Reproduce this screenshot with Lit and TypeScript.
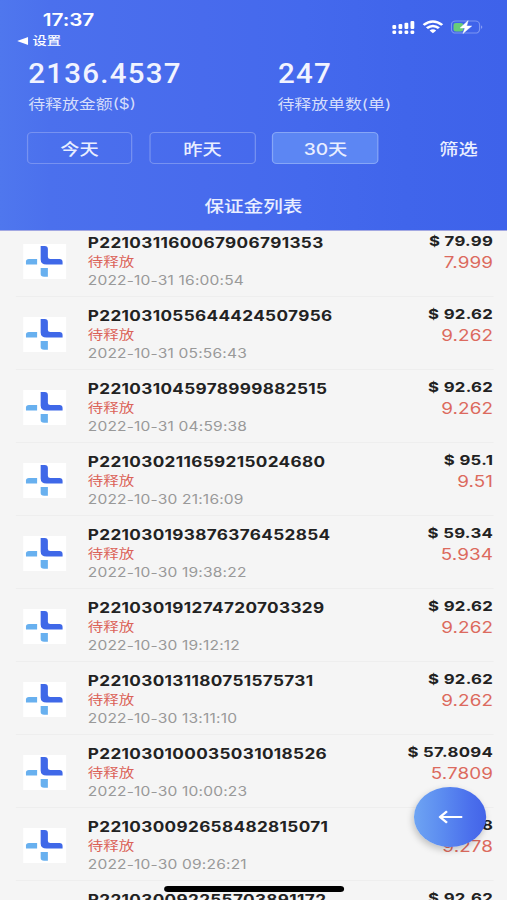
import { LitElement, html, css } from "lit";
import { customElement, property } from "lit/decorators.js";

interface Deposit {
  id: string;
  time: string;
  amount: string;
  held: string;
}

const DEPOSITS: Deposit[] = [
  { id: "P221031160067906791353", time: "2022-10-31 16:00:54", amount: "79.99", held: "7.999" },
  { id: "P221031055644424507956", time: "2022-10-31 05:56:43", amount: "92.62", held: "9.262" },
  { id: "P221031045978999882515", time: "2022-10-31 04:59:38", amount: "92.62", held: "9.262" },
  { id: "P221030211659215024680", time: "2022-10-30 21:16:09", amount: "95.1", held: "9.51" },
  { id: "P221030193876376452854", time: "2022-10-30 19:38:22", amount: "59.34", held: "5.934" },
  { id: "P221030191274720703329", time: "2022-10-30 19:12:12", amount: "92.62", held: "9.262" },
  { id: "P221030131180751575731", time: "2022-10-30 13:11:10", amount: "92.62", held: "9.262" },
  { id: "P221030100035031018526", time: "2022-10-30 10:00:23", amount: "57.8094", held: "5.7809" },
  { id: "P221030092658482815071", time: "2022-10-30 09:26:21", amount: "92.78", held: "9.278" },
  { id: "P221030092255703891172", time: "2022-10-30 09:22:55", amount: "92.62", held: "9.262" },
];

@customElement("deposit-row")
class DepositRow extends LitElement {
  @property({ attribute: false }) item!: Deposit;

  static styles = css`
    :host {
      display: flex;
      box-sizing: border-box;
      height: 73px;
      margin: 0 11px 0 13px;
      padding-left: 6px;
      border-bottom: 1px solid #eeeeee;
    }
    .logo {
      width: 35px;
      height: 35px;
      margin-top: 20px;
      background: #fff;
      display: block;
    }
    .info {
      flex: 1;
      margin-left: 17.7px;
      padding-top: 10px;
      white-space: nowrap;
    }
    .id {
      font-size: 14px;
      line-height: 18px;
      font-weight: 650;
      color: #222;
      letter-spacing: 0.29px;
      font-feature-settings: "tnum" 0;
    }
    .state {
      font-size: 12.6px;
      line-height: 19px;
      color: #db6258;
    }
    .time {
      font-size: 12.7px;
      line-height: 19px;
      color: #999;
      letter-spacing: 0.15px;
    }
    .sums {
      text-align: right;
      padding-top: 8px;
      margin-right: 0.3px;
      white-space: nowrap;
    }
    .amount {
      font-size: 13.7px;
      line-height: 18px;
      font-weight: 650;
      color: #222;
      letter-spacing: 0.25px;
    }
    .held {
      font-size: 15.4px;
      line-height: 25px;
      color: #dc6a5e;
      letter-spacing: 0.1px;
    }
  `;

  render() {
    const d = this.item;
    return html`
      <svg class="logo" viewBox="0 0 35 35">
        <path d="M14.2 2H17.5Q20.1 2 20.1 5V13Q20.1 15 22.1 15H29.5Q32.1 15 32.1 18V20.4H19Q14.2 20.4 14.2 15.4Z" fill="#3f68e8" />
        <path d="M4.6 15H11.3V20.4H2.2V17.6Q2.2 15 4.6 15Z" fill="#68b0ef" />
        <path d="M14.2 24H20.1V32.8H17Q14.2 32.8 14.2 30Z" fill="#68b0ef" />
      </svg>
      <div class="info">
        <div class="id">${d.id}</div>
        <div class="state">待释放</div>
        <div class="time">${d.time}</div>
      </div>
      <div class="sums">
        <div class="amount">$ ${d.amount}</div>
        <div class="held">${d.held}</div>
      </div>
    `;
  }
}

@customElement("app-root")
class AppRoot extends LitElement {
  static styles = css`
    :host {
      display: block;
      width: 507px;
      height: 900px;
      overflow: hidden;
      font-family: Inter, "Noto Sans CJK SC", sans-serif;
    }
    /* A 414px wide phone layout, widened to fill the 507px window. */
    .screen {
      position: relative;
      width: 414px;
      height: 900px;
      overflow: hidden;
      background: #f5f5f5;
      transform: scaleX(1.22464);
      transform-origin: 0 0;
    }
    .header {
      box-sizing: border-box;
      height: 231px;
      border-bottom: 1px solid #a3a8e2;
      background: linear-gradient(90deg, #4f77ee 0%, #4b70ed 10%, #486bed 40%, #4469ed 60%, #4065eb 80%, #3e62ea 100%);
      color: #fff;
      position: relative;
      z-index: 1;
      display: flex;
      flex-direction: column;
    }
    .status {
      display: flex;
      justify-content: space-between;
      height: 54px;
    }
    .clock {
      padding: 10px 0 0 35px;
      font-size: 17px;
      line-height: 20px;
      font-weight: 600;
      letter-spacing: -0.1px;
    }
    .back {
      display: flex;
      align-items: center;
      gap: 3.5px;
      margin-left: -21px;
      padding-top: 3px;
      font-size: 11.7px;
      line-height: 16px;
      font-weight: 500;
      letter-spacing: 0;
    }
    .tri {
      width: 9px;
      height: 8px;
    }
    .icons {
      display: flex;
      gap: 6px;
      margin: 20px 19px 0 0;
      height: 14px;
    }
    .totals {
      display: grid;
      grid-template-columns: 203.5px 1fr;
      padding: 5px 0 0 23px;
      height: 73px;
    }
    .value {
      font: 500 28px/29px Roboto, sans-serif;
      color: #f1f3ff;
      letter-spacing: 1.2px;
      transform: scaleX(0.86);
      transform-origin: 0 0;
    }
    .label {
      font-size: 13.8px;
      line-height: 20px;
      margin-top: 6px;
      color: #d5ddfb;
    }
    .filters {
      display: flex;
      align-items: center;
      padding-left: 21.6px;
      gap: 13.6px;
      font-size: 15.7px;
      font-weight: 500;
      color: #e9eeff;
    }
    .chip {
      box-sizing: border-box;
      width: 86.8px;
      height: 32px;
      border: 1px solid #7792f1;
      border-radius: 4px;
      display: flex;
      align-items: center;
      justify-content: center;
    }
    .on {
      background: #5c86f3;
      border-color: #86a6f7;
    }
    .more {
      margin-left: 36px;
    }
    .title {
      margin-top: 30px;
      text-align: center;
      font-size: 16px;
      line-height: 24px;
      font-weight: 500;
      color: #e9eeff;
    }
    .list {
      margin-top: -7px;
    }
    .fab {
      position: absolute;
      z-index: 2;
      left: 338px;
      top: 787px;
      width: 59px;
      height: 60px;
      border-radius: 50%;
      background: linear-gradient(90deg, #6ea4f3 0%, #5b8bf0 40%, #4a6eec 80%, #4364e8 100%);
      box-shadow: -1px 3px 7px rgba(0, 0, 0, 0.22);
      display: flex;
      align-items: center;
      justify-content: center;
    }
    .home {
      position: absolute;
      z-index: 3;
      left: 134px;
      top: 886px;
      width: 147px;
      height: 6px;
      border-radius: 3px;
      background: #000;
    }
  `;

  render() {
    return html`
      <div class="screen">
        <div class="header">
          <div class="status">
            <div class="clock">
              17:37
              <div class="back">
                <svg class="tri" viewBox="0 0 9 8"><path d="M0 4L9 0V8Z" fill="#fff" /></svg>
                <span>设置</span>
              </div>
            </div>
            <div class="icons">
              <svg width="19" height="14" viewBox="0 0 19 14" fill="#fff">
                <rect x="0.4" y="5" width="3.1" height="4" rx="1" />
                <rect x="5.4" y="4" width="3.1" height="5" rx="1" />
                <rect x="10.3" y="2.7" width="3.1" height="6.3" rx="1" />
                <rect x="15.2" y="1" width="3.1" height="8" rx="1" />
                <rect x="0.4" y="10.5" width="3.1" height="3.5" rx="1.2" />
                <rect x="5.4" y="10.5" width="3.1" height="3.5" rx="1.2" />
                <rect x="10.3" y="10.5" width="3.1" height="3.5" rx="1.2" />
                <rect x="15.2" y="10.5" width="3.1" height="3.5" rx="1.2" />
              </svg>
              <svg width="17" height="14" viewBox="0 0 17 14" fill="none" stroke="#fff" stroke-width="2.4">
                <path d="M0.9 5Q8.5 -2.2 16.1 5" />
                <path d="M3.6 8.2Q8.5 3.6 13.4 8.2" />
                <path d="M5.8 10.4Q8.5 8.2 11.2 10.4L8.5 13.2Z" fill="#fff" stroke="none" />
              </svg>
              <svg width="27" height="14" viewBox="0 0 27 14">
                <rect x="0.6" y="1.1" width="23" height="12" rx="3.6" fill="none" stroke="#7d95f1" />
                <path d="M25 5.2Q26.6 7 25 8.9Z" fill="#a9b8f6" />
                <rect x="2.3" y="2.9" width="8" height="8.5" rx="2" fill="#68cc78" />
                <path d="M14.3 0.6L7.7 8H11.6L10 13.6L17.2 6H13.1Z" fill="#fff" stroke="#fff" stroke-width="0.4" />
              </svg>
            </div>
          </div>
          <div class="totals">
            <div>
              <div class="value">2136.4537</div>
              <div class="label">待释放金额($)</div>
            </div>
            <div>
              <div class="value">247</div>
              <div class="label">待释放单数(单)</div>
            </div>
          </div>
          <div class="filters">
            <div class="chip">今天</div>
            <div class="chip">昨天</div>
            <div class="chip on">30天</div>
            <div class="more">筛选</div>
          </div>
          <div class="title">保证金列表</div>
        </div>
        <div class="list">${DEPOSITS.map((d) => html`<deposit-row .item=${d}></deposit-row>`)}</div>
        <div class="fab">
          <svg width="20" height="14" viewBox="0 0 20 14" fill="none" stroke="#fff" stroke-width="2">
            <path d="M1.5 7H19.5M7 1.2L1.3 7L7 12.8" />
          </svg>
        </div>
        <div class="home"></div>
      </div>
    `;
  }
}
